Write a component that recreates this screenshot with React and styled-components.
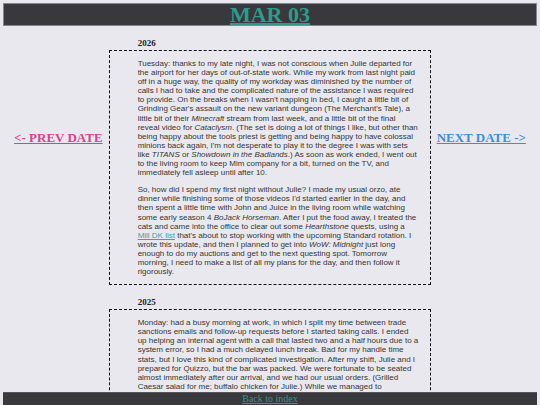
import React from "react";
import styled, { createGlobalStyle } from "styled-components";

const Global = createGlobalStyle`
  html, body {
    margin: 0;
    padding: 0;
    background: #e9e8ee;
  }
  body {
    font-family: "Liberation Serif", "Times New Roman", serif;
    color: #222;
  }
`;

const Header = styled.header`
  margin: 3px 3px 0;
  background: #38383d;
  border: 1px solid #86868e;
  text-align: center;
  height: 21px;
  font-size: 22px;
  line-height: 21px;
`;

const Title = styled.a`
  font-family: "Liberation Serif", "Times New Roman", serif;
  font-weight: bold;
  font-size: 22px;
  line-height: 21px;
  color: #2f9a8b;
  text-decoration: underline;
  text-decoration-thickness: 2px;
  text-underline-offset: 1px;
`;

const Row = styled.main`
  display: flex;
  justify-content: center;
  align-items: flex-start;
  gap: 6px;
  padding-bottom: 20px;
`;

const NavLink = styled.a`
  margin-top: 104px;
  font-family: "Liberation Serif", "Times New Roman", serif;
  font-weight: bold;
  font-size: 13px;
  line-height: 15px;
  white-space: nowrap;
  color: ${(p) => p.$color};
  text-decoration: underline;
`;

const Column = styled.div`
  width: 322px;
  flex: none;
`;

const Year = styled.h3`
  margin: 12px 0 2px;
  padding-left: 29px;
  font-family: "Liberation Serif", "Times New Roman", serif;
  font-weight: bold;
  font-size: 9px;
  line-height: 10px;
  color: #1e1e1e;
`;

const Entry = styled.div`
  border: 1px dashed #111;
  padding: 0 11px 0 28px;
`;

const Para = styled.p`
  margin: 8px 0;
  font-family: "Liberation Sans", Arial, sans-serif;
  font-size: 8px;
  line-height: 9.1px;
  color: #363636;
`;

const TextLink = styled.a`
  color: #3aa6a0;
  text-decoration: underline;
`;

const Footer = styled.footer`
  position: fixed;
  left: 3px;
  right: 3px;
  bottom: 0;
  height: 12px;
  background: #38383d;
  border-top: 1px solid #55555b;
  text-align: center;
  font-size: 10px;
  line-height: 12px;
`;

const BackLink = styled.a`
  font-family: "Liberation Serif", "Times New Roman", serif;
  font-size: 10px;
  line-height: 12px;
  color: #2f9a8b;
  text-decoration: underline;
`;

export default function App() {
  return (
    <>
      <Global />
      <Header>
        <Title href="#">MAR 03</Title>
      </Header>
      <Row>
        <NavLink href="#" $color="#d6438a">&lt;- PREV DATE</NavLink>
        <Column>
          <Year>2026</Year>
          <Entry>
            <Para>
              Tuesday: thanks to my late night, I was not conscious when Julie departed for the
              airport for her days of out-of-state work. While my work from last night paid off in a
              huge way, the quality of my workday was diminished by the number of calls I had to
              take and the complicated nature of the assistance I was required to provide. On the
              breaks when I wasn't napping in bed, I caught a little bit of Grinding Gear's assault
              on the new variant dungeon (The Merchant's Tale), a little bit of their{" "}
              <i>Minecraft</i> stream from last week, and a little bit of the final reveal video for{" "}
              <i>Cataclysm</i>. (The set is doing a lot of things I like, but other than being happy
              about the tools priest is getting and being happy to have colossal minions back again,
              I'm not desperate to play it to the degree I was with sets like <i>TITANS</i> or{" "}
              <i>Showdown in the Badlands</i>.) As soon as work ended, I went out to the living room
              to keep Mim company for a bit, turned on the TV, and immediately fell asleep until
              after 10.
            </Para>
            <Para>
              So, how did I spend my first night without Julie? I made my usual orzo, ate dinner
              while finishing some of those videos I'd started earlier in the day, and then spent a
              little time with John and Juice in the living room while watching some early season 4{" "}
              <i>BoJack Horseman</i>. After I put the food away, I treated the cats and came into the
              office to clear out some <i>Hearthstone</i> quests, using a{" "}
              <TextLink href="#">Mill DK list</TextLink> that's about to stop working with the
              upcoming Standard rotation. I wrote this update, and then I planned to get into{" "}
              <i>WoW: Midnight</i> just long enough to do my auctions and get to the next questing
              spot. Tomorrow morning, I need to make a list of all my plans for the day, and then
              follow it rigorously.
            </Para>
          </Entry>
          <Year>2025</Year>
          <Entry>
            <Para>
              Monday: had a busy morning at work, in which I split my time between trade sanctions
              emails and follow-up requests before I started taking calls. I ended up helping an
              internal agent with a call that lasted two and a half hours due to a system error, so
              I had a much delayed lunch break. Bad for my handle time stats, but I love this kind of
              complicated investigation. After my shift, Julie and I prepared for Quizzo, but the bar
              was packed. We were fortunate to be seated almost immediately after our arrival, and
              we had our usual orders. (Grilled Caesar salad for me; buffalo chicken for Julie.)
              While we managed to
            </Para>
          </Entry>
        </Column>
        <NavLink href="#" $color="#3d8fd4">NEXT DATE -&gt;</NavLink>
      </Row>
      <Footer>
        <BackLink href="#">Back to index</BackLink>
      </Footer>
    </>
  );
}
